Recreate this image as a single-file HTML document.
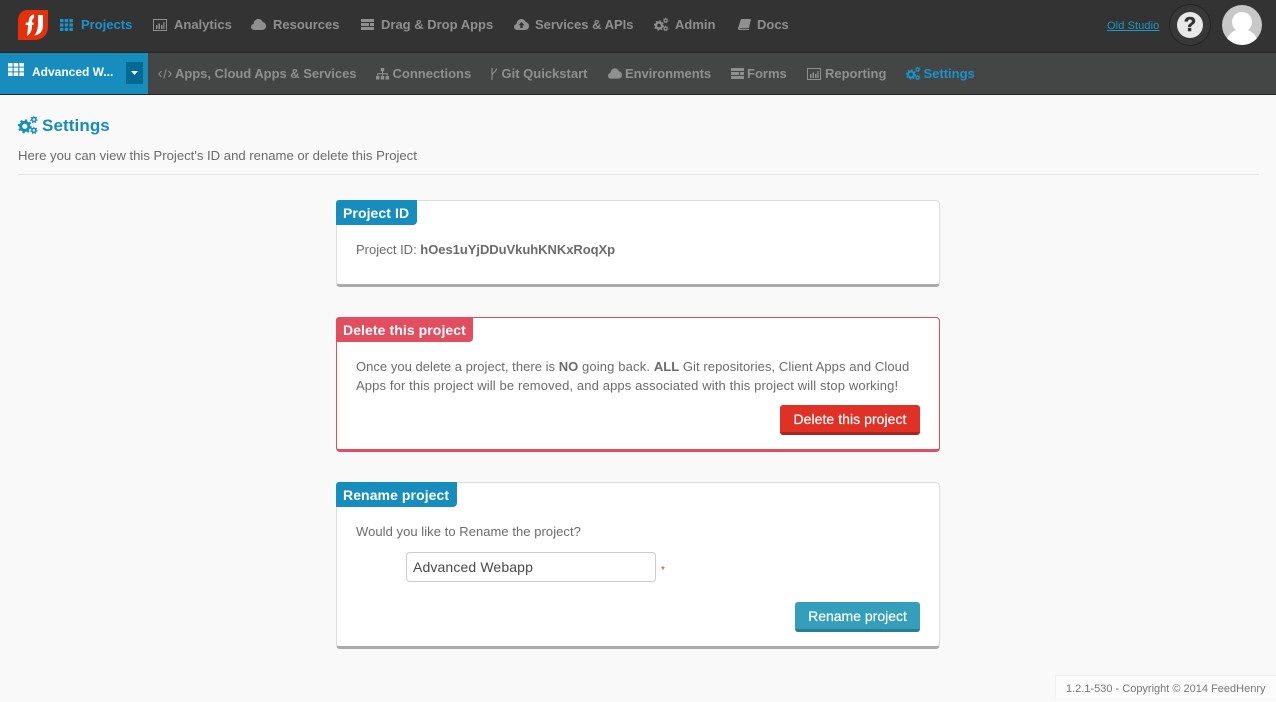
<!DOCTYPE html>
<html><head><meta charset="utf-8"><style>
html,body{margin:0;padding:0;width:1276px;height:698px;overflow:hidden;background:#f9f9f9;font-family:"Liberation Sans",sans-serif;color:#6b6b6b}
*{box-sizing:border-box}
.a{position:absolute;white-space:nowrap}
#top{position:absolute;left:0;top:0;width:1276px;height:52px;background:#333}
#sub{position:absolute;left:0;top:52px;width:1276px;height:43px;background:#444645;border-top:1px solid #252525;border-bottom:1px solid #252525}
.n{font-size:13px;font-weight:bold;color:#8f8f8f;line-height:16px}
.t{top:17px}.s{top:66px}
.b{color:#1a93cc}
svg{position:absolute;overflow:visible}
.card{position:absolute;left:336px;width:604px;background:#fff;border:1px solid #ddd;border-bottom:3px solid #aaa;border-radius:4px}
.tag{position:absolute;left:-1px;top:-1px;height:25px;background:#168dbd;color:#fff;font-size:14px;font-weight:bold;line-height:27px;letter-spacing:.08px;padding:0 7.500px 0 7px;border-radius:3px 0 4px 0}
.p{font-size:13px;line-height:19px;color:#6b6b6b}
.btn{position:absolute;color:#fff;font-size:14px;font-weight:normal;text-align:center;border-radius:3px;-webkit-text-stroke:.2px #fff}
</style></head><body>
<svg width="0" height="0" style="left:0;top:0"><defs>
<g id="gear"><circle cx="5" cy="7.500" r="3" fill="none" stroke="currentColor" stroke-width="2.200"/><circle cx="5" cy="7.500" r="4.500" fill="none" stroke="currentColor" stroke-width="1.300" stroke-dasharray="1.650 1.880"/><circle cx="11.700" cy="2.500" r="1.500" fill="none" stroke="currentColor" stroke-width="1.200"/><circle cx="11.700" cy="2.500" r="2.400" fill="none" stroke="currentColor" stroke-width=".7" stroke-dasharray=".9 1.200"/><circle cx="11.700" cy="10.500" r="1.500" fill="none" stroke="currentColor" stroke-width="1.200"/><circle cx="11.700" cy="10.500" r="2.400" fill="none" stroke="currentColor" stroke-width=".7" stroke-dasharray=".9 1.200"/></g>
</defs></svg>
<div id="top"></div><div id="sub"></div>
<div class="a" style="left:0;top:53px;width:148px;height:41px;background:#168dbd"></div>

<svg style="left:18px;top:10px" width="30" height="30" viewBox="0 0 30 30"><path d="M10 0H30V17C30 25 24 30 16 30H0V11C0 4 4 0 10 0Z" fill="#e5310b"/><path d="M9 26C9.500 22 10 18 10 15H7.500L8 12.500H10.500C11 8 12 5 16 4.500V8C14.500 8.500 14 10 14 12.500H15.500V15H14C14 19 13.500 23 9 26Z" fill="#fff"/><path d="M16 25.500C19 23 19.500 19 20 15V5H25V15C25 21 22 25 16 25.500Z" fill="#fff"/></svg>

<svg style="left:60px;top:19px" width="13" height="12" viewBox="0 0 13 12" fill="#1a93cc"><path d="M0 0h3.500v3.200H0zM4.700 0h3.500v3.200H4.700zM9.400 0h3.500v3.200H9.400zM0 4.400h3.500v3.200H0zM4.700 4.400h3.500v3.200H4.700zM9.400 4.400h3.500v3.200H9.400zM0 8.800h3.500V12H0zM4.700 8.800h3.500V12H4.700zM9.400 8.800h3.500V12H9.400z"/></svg>
<div class="a n t b" style="left:81px">Projects</div>

<svg style="left:153px;top:19px" width="14" height="12" viewBox="0 0 14 12"><rect x=".5" y=".5" width="13" height="11" fill="none" stroke="#8f8f8f"/><path d="M3 6h1.500v4H3zM5.500 4.500H7V10H5.500zM8 6h1.500v4H8zM10.300 3h1.200v7h-1.200z" fill="#8f8f8f"/></svg>
<div class="a n t" style="left:174px">Analytics</div>

<svg style="left:251px;top:19px" width="15" height="11" viewBox="0 0 15 11"><path d="M3.500 11C1.500 11 0 9.700 0 8c0-1.500 1-2.700 2.500-3C2.800 2 4.800 0 7.300 0c2 0 3.600 1.100 4.300 2.900C13.500 3.400 15 5 15 7c0 2.300-1.700 4-4 4z" fill="#8f8f8f"/></svg>
<div class="a n t" style="left:273px">Resources</div>

<svg style="left:361px;top:19px" width="13" height="11" viewBox="0 0 13 11" fill="#8f8f8f"><path d="M0 0h13v3H0zM0 4h8v3H0zM9 4h4v3H9zM0 8h13v3H0z"/></svg>
<div class="a n t" style="left:381px">Drag &amp; Drop Apps</div>

<svg style="left:514px;top:19px" width="15" height="11" viewBox="0 0 15 11"><path d="M3.500 11C1.500 11 0 9.700 0 8c0-1.500 1-2.700 2.500-3C2.800 2 4.800 0 7.300 0c2 0 3.600 1.100 4.300 2.900C13.500 3.400 15 5 15 7c0 2.300-1.700 4-4 4z" fill="#8f8f8f"/><path d="M7.500 3l3 3.300H8.700V9H6.300V6.300H4.500z" fill="#333"/></svg>
<div class="a n t" style="left:535px">Services &amp; APIs</div>

<svg style="left:654px;top:18px;color:#8f8f8f" width="14" height="13" viewBox="0 0 14 13"><use href="#gear"/></svg>
<div class="a n t" style="left:675px">Admin</div>

<svg style="left:738px;top:19px" width="13" height="11" viewBox="0 0 13 11"><path d="M3 0h10l-2 9H2.500C1.800 9 1.500 9.400 1.800 9.800H11V11H1.500C.4 11-.1 10 .1 9z" fill="#8f8f8f"/></svg>
<div class="a n t" style="left:757px">Docs</div>

<div class="a" style="left:1107px;top:18px;font-size:11px;line-height:16px;letter-spacing:.1px;color:#1a9ac4;text-decoration:underline">Old Studio</div>
<div class="a" style="left:1169px;top:4px;width:42px;height:42px;border-radius:50%;background:#383838;border:1px solid #242424"></div>
<div class="a" style="left:1177px;top:12px;width:26px;height:26px;border-radius:50%;background:#e8e8e8;color:#333;font-size:20px;font-weight:bold;line-height:26px;text-align:center;-webkit-text-stroke:.6px #333">?</div>
<div class="a" style="left:1222px;top:5px;width:40px;height:40px;border-radius:50%;background:#c8c8c8;overflow:hidden">
<div class="a" style="left:10px;top:7px;width:20px;height:20px;border-radius:50%;background:#fff"></div>
<div class="a" style="left:4px;top:24px;width:32px;height:30px;border-radius:50%;background:#fff"></div></div>

<svg style="left:8px;top:63px" width="16" height="13" viewBox="0 0 16 12" preserveAspectRatio="none" fill="#fff"><path d="M0 0h4.500v3.400H0zM5.700 0h4.500v3.400H5.700zM11.400 0h4.500v3.400h-4.500zM0 4.300h4.500v3.400H0zM5.700 4.300h4.500v3.400H5.700zM11.400 4.300h4.500v3.400h-4.500zM0 8.600h4.500V12H0zM5.700 8.600h4.500V12H5.700zM11.400 8.600h4.500V12h-4.500z"/></svg>
<div class="a" style="left:32px;top:64px;font-size:12px;font-weight:bold;line-height:16px;color:#fff">Advanced W...</div>
<div class="a" style="left:126px;top:62px;width:17px;height:22px;background:#006a94"></div>
<svg style="left:131px;top:71px" width="7" height="4" viewBox="0 0 7 4"><path d="M0 0h7L3.500 4z" fill="#fff"/></svg>

<svg style="left:158px;top:69px" width="14" height="10" viewBox="0 0 14 10" fill="none" stroke="#8f8f8f"><path d="M3.500 2L.8 5l2.700 3M10.500 2l2.700 3-2.700 3M8.200 .5L5.800 9.500"/></svg>
<div class="a n s" style="left:175px;letter-spacing:-.03px">Apps, Cloud Apps &amp; Services</div>

<svg style="left:376px;top:68px" width="13" height="12" viewBox="0 0 13 12" fill="#8f8f8f"><path d="M4.800 0h3.400v3.200H4.800zM6 3.200h1v2h4.800v2.500h-1V6.200H7v1.500H6V6.200H2.200v1.500h-1V5.200H6zM0 8h3.400v3.500H0zM4.800 8h3.400v3.500H4.800zM9.600 8H13v3.500H9.600z"/></svg>
<div class="a n s" style="left:392.500px">Connections</div>

<svg style="left:490px;top:68px" width="8" height="12" viewBox="0 0 8 12" fill="none" stroke="#8f8f8f" stroke-width="1.100"><path d="M2 0v12M6.500 0.500C6.500 4 2 4.500 2 7.500"/></svg>
<div class="a n s" style="left:501.500px">Git Quickstart</div>

<svg style="left:608px;top:68px" width="14" height="11" viewBox="0 0 15 11"><path d="M3.500 11C1.500 11 0 9.700 0 8c0-1.500 1-2.700 2.500-3C2.800 2 4.800 0 7.300 0c2 0 3.600 1.100 4.300 2.900C13.500 3.400 15 5 15 7c0 2.300-1.700 4-4 4z" fill="#8f8f8f"/></svg>
<div class="a n s" style="left:625px;letter-spacing:-.05px">Environments</div>

<svg style="left:731px;top:68px" width="13" height="11" viewBox="0 0 13 11" fill="#8f8f8f"><path d="M0 0h13v3H0zM0 4h8v3H0zM9 4h4v3H9zM0 8h13v3H0z"/></svg>
<div class="a n s" style="left:747px">Forms</div>

<svg style="left:807px;top:68px" width="14" height="12" viewBox="0 0 14 12"><rect x=".5" y=".5" width="13" height="11" fill="none" stroke="#8f8f8f"/><path d="M3 6h1.500v4H3zM5.500 4.500H7V10H5.500zM8 6h1.500v4H8zM10.300 3h1.200v7h-1.200z" fill="#8f8f8f"/></svg>
<div class="a n s" style="left:825px">Reporting</div>

<svg style="left:906px;top:67px;color:#1a93cc" width="14" height="13" viewBox="0 0 14 13"><use href="#gear"/></svg>
<div class="a n s b" style="left:923.500px">Settings</div>

<svg style="left:18px;top:116px;color:#168dbd" width="19" height="18" viewBox="0 0 14 13"><use href="#gear"/></svg>
<div class="a" style="left:42px;top:116px;font-size:17px;font-weight:bold;line-height:20px;letter-spacing:.1px;color:#168dbd">Settings</div>
<div class="a p" style="left:18px;top:145.500px;font-size:13.120px">Here you can view this Project's ID and rename or delete this Project</div>
<div class="a" style="left:18px;top:174px;width:1241px;height:1px;background:#e4e4e4"></div>

<div class="card" style="top:200px;height:87px">
<div class="tag">Project ID</div>
<div class="a p" style="left:19px;top:39px">Project ID: <b style="letter-spacing:-.04px">hOes1uYjDDuVkuhKNKxRoqXp</b></div>
</div>

<div class="card" style="top:317px;height:135px;border-color:#e04e5f">
<div class="tag" style="background:#e04e5f">Delete this project</div>
<div class="a p" style="left:19px;top:39px"><span style="letter-spacing:.03px">Once you delete a project, there is </span><b>NO</b><span style="letter-spacing:.15px"> going back. </span><b>ALL</b><span style="letter-spacing:.08px"> Git repositories, Client Apps and Cloud</span><br><span style="letter-spacing:.125px">Apps for this project will be removed, and apps associated with this project will stop working!</span></div>
<div class="btn" style="left:443px;top:87px;width:140px;height:30px;background:#e03127;border-bottom:3px solid #a92720;line-height:29px;letter-spacing:.05px">Delete this project</div>
</div>

<div class="card" style="top:482px;height:167px">
<div class="tag">Rename project</div>
<div class="a p" style="left:19px;top:39px;letter-spacing:.05px">Would you like to Rename the project?</div>
<div class="a" style="left:69px;top:69px;width:250px;height:30px;background:#fff;border:1px solid #ccc;border-radius:4px;font-size:14px;letter-spacing:.13px;line-height:28px;padding-left:6px;color:#484848">Advanced Webapp</div>
<div class="a" style="left:324px;top:82px;font-size:10px;line-height:12px;color:#e03127">*</div>
<div class="btn" style="left:458px;top:119px;width:125px;height:30px;background:#339fba;border-bottom:3px solid #2a7d92;line-height:29px">Rename project</div>
</div>

<div class="a" style="left:1055px;top:675px;width:221px;height:23px;background:#fcfcfc;border:1px solid #f0f0f0;border-width:1px 0 0 1px;font-size:11px;line-height:26px;padding-left:10px;color:#777">1.2.1-530 - Copyright © 2014 FeedHenry</div>
</body></html>
